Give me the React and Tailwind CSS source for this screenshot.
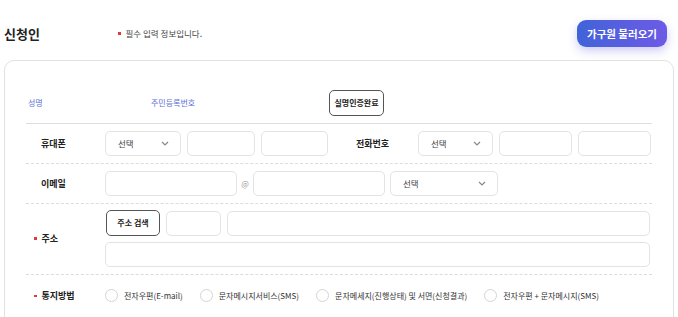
import React from 'react';

const font = { fontFamily: '"Noto Sans CJK KR", "Noto Sans", sans-serif' };

function Chevron() {
  return (
    <svg width="8" height="5" viewBox="0 0 8 5" className="shrink-0">
      <path d="M1 1l3 3 3-3" fill="none" stroke="#888" strokeWidth="1.2" />
    </svg>
  );
}

function Select({ w }) {
  return (
    <div className={`flex h-[25px] items-center justify-between rounded-[5px] border border-[#e3e3e3] bg-white pl-[12px] pr-[11px] ${w}`}>
      <span className="text-[8.5px] text-[#444]">선택</span>
      <Chevron />
    </div>
  );
}

function Input({ w }) {
  return <div className={`h-[25px] rounded-[5px] border border-[#e3e3e3] bg-white ${w}`} />;
}

function Label({ text, required, w = 'w-[79px]' }) {
  return (
    <div className={`flex shrink-0 items-center ${w}`}>
      {required ? (
        <>
          <span className="ml-[8px] mr-[5px] h-[2.5px] w-[2.5px] bg-[#e03b3b]" />
          <span className="text-[9px] font-bold text-[#222]">{text}</span>
        </>
      ) : (
        <span className="ml-[15px] text-[9px] font-bold text-[#222]">{text}</span>
      )}
    </div>
  );
}

function Radio({ label }) {
  return (
    <div className="flex items-center gap-[6px]">
      <span className="h-[13px] w-[13px] rounded-full border border-[#d4d4d4] bg-white" />
      <span className="text-[8px] text-[#333]">{label}</span>
    </div>
  );
}

export default function App() {
  return (
    <div className="h-[317px] w-[678px] overflow-hidden bg-white" style={font}>
      {/* header */}
      <div className="flex h-[60px] items-center pl-[4px] pr-[11px] pt-[7px]">
        <h2 className="w-[114px] text-[13px] font-bold text-[#222]">신청인</h2>
        <span className="mr-[5px] h-[2.5px] w-[2.5px] bg-[#e03b3b]" />
        <span className="text-[8.5px] text-[#444]">필수 입력 정보입니다.</span>
        <button className="ml-auto h-[27px] w-[90px] rounded-[9px] bg-gradient-to-r from-[#3f63d8] to-[#6c5ae6] text-[10.5px] font-bold text-white shadow-[0_4px_10px_rgba(90,90,220,0.3)]">
          가구원 불러오기
        </button>
      </div>

      {/* card */}
      <div className="mx-[4px] h-[300px] rounded-[10px] border border-[#e2e2e2] px-[21px]">
        <div className="flex items-center border-b border-[#dedede] pb-[7px] pt-[29px]">
          <span className="w-[125px] pl-[2px] text-[8px] text-[#5b6fd9]">성명</span>
          <span className="w-[178px] text-[8px] text-[#5b6fd9]">주민등록번호</span>
          <button className="h-[26px] w-[55px] rounded-[5px] border border-[#555] bg-white text-[8px] font-bold text-[#222]">
            실명인증완료
          </button>
        </div>

        <div className="flex items-center border-b border-dashed border-[#dcdcdc] py-[7px]">
          <Label text="휴대폰" />
          <div className="flex items-center gap-[6px]">
            <Select w="w-[76px]" />
            <Input w="w-[68px]" />
            <Input w="w-[67px]" />
          </div>
          <Label text="전화번호" w="w-[90px] pl-[13px]" />
          <div className="flex items-center gap-[6px]">
            <Select w="w-[75px]" />
            <Input w="w-[73px]" />
            <Input w="w-[73px]" />
          </div>
        </div>

        <div className="flex items-center border-b border-dashed border-[#dcdcdc] py-[7px]">
          <Label text="이메일" />
          <Input w="w-[132px]" />
          <span className="w-[16px] text-center text-[8px] text-[#999]">@</span>
          <Input w="w-[132px]" />
          <div className="ml-[5px]">
            <Select w="w-[108px]" />
          </div>
        </div>

        <div className="flex items-center border-b border-dashed border-[#dcdcdc] pb-[7px] pt-[6px]">
          <Label text="주소" required />
          <div className="flex flex-1 flex-col gap-[6px] pr-[2px]">
            <div className="flex items-center gap-[6px]">
              <button className="ml-[1px] h-[26px] w-[54px] rounded-[5px] border border-[#555] bg-white text-[8px] font-bold text-[#222]">
                주소 검색
              </button>
              <Input w="w-[55px]" />
              <div className="h-[25px] flex-1 rounded-[5px] border border-[#e3e3e3]" />
            </div>
            <Input w="w-full" />
          </div>
        </div>

        <div className="flex items-center pb-[13px] pt-[14px]">
          <Label text="통지방법" required />
          <div className="flex items-center gap-[17px]">
            <Radio label="전자우편(E-mail)" />
            <Radio label="문자메시지서비스(SMS)" />
            <Radio label="문자메세지(진행상태) 및 서면(신청결과)" />
            <Radio label="전자우편 + 문자메시지(SMS)" />
          </div>
        </div>
      </div>
    </div>
  );
}
